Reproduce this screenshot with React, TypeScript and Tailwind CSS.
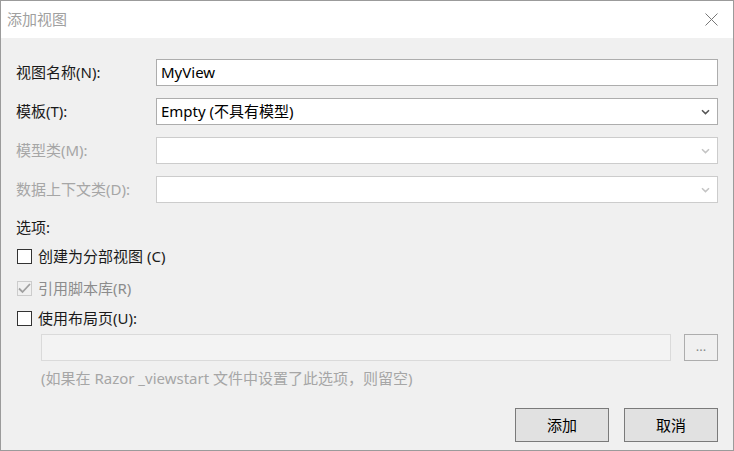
import React from 'react';

const font = { fontFamily: '"Noto Sans", "Noto Sans CJK SC", sans-serif' };

const Chevron = ({ disabled }: { disabled?: boolean }) => (
  <svg width="9" height="6" viewBox="0 0 9 6" className="mr-[7px]">
    <path d="M1 1.2 L4.5 4.6 L8 1.2" fill="none" stroke={disabled ? '#c4c4c4' : '#555'} strokeWidth="1.5" />
  </svg>
);

const FieldRow = ({
  label,
  value,
  select,
  disabled,
  first,
}: {
  label: string;
  value?: string;
  select?: boolean;
  disabled?: boolean;
  first?: boolean;
}) => (
  <div className={`flex items-center h-[27px] ${first ? 'mt-[21px]' : 'mt-[12px]'}`}>
    <div className={`w-[140px] text-[15px] ${disabled ? 'text-[#a6a6a6]' : 'text-[#1a1a1a]'}`}>{label}</div>
    <div
      className={`flex-1 h-full flex items-center justify-between bg-white border ${
        disabled ? 'border-[#cccccc]' : 'border-[#adadad]'
      }`}
    >
      <span className="pl-[4px] text-[15px] text-black">{value}</span>
      {select && <Chevron disabled={disabled} />}
    </div>
  </div>
);

const CheckRow = ({
  label,
  checked,
  disabled,
  className,
}: {
  label: string;
  checked?: boolean;
  disabled?: boolean;
  className: string;
}) => (
  <div className={`flex items-center h-[20px] ${className}`}>
    <div
      className={`ml-[1px] w-[15px] h-[15px] flex items-center justify-center border ${
        disabled ? 'border-[#cccccc] bg-[#f0f0f0]' : 'border-[#333333] bg-white'
      }`}
    >
      {checked && (
        <svg width="13" height="11" viewBox="0 0 13 11">
          <path d="M1 5.5 L4.5 9 L12 1" fill="none" stroke="#a0a0a0" strokeWidth="1.8" />
        </svg>
      )}
    </div>
    <span className={`ml-[6px] text-[15px] ${disabled ? 'text-[#8c8c8c]' : 'text-[#1a1a1a]'}`}>{label}</span>
  </div>
);

export default function App() {
  return (
    <div style={font} className="w-[734px] h-[451px] flex flex-col border border-[#9b9b9b] bg-[#f0f0f0]">
      {/* Title bar */}
      <div className="h-[37px] shrink-0 bg-white flex items-center justify-between">
        <span className="pl-[6px] text-[15px] text-[#a0a0a0]">添加视图</span>
        <svg width="13" height="13" viewBox="0 0 13 13" className="mr-[15px]">
          <path d="M0.5 0.5 L12.5 12.5 M12.5 0.5 L0.5 12.5" stroke="#777" strokeWidth="1" />
        </svg>
      </div>

      {/* Body */}
      <div className="flex-1 flex flex-col px-[15px]">
        <FieldRow first label="视图名称(N):" value="MyView" />
        <FieldRow label="模板(T):" value="Empty (不具有模型)" select />
        <FieldRow label="模型类(M):" select disabled />
        <FieldRow label="数据上下文类(D):" select disabled />

        <div className="mt-[14px] h-[20px] flex items-center text-[15px] text-[#1a1a1a]">选项:</div>

        <CheckRow className="mt-[9px]" label="创建为分部视图 (C)" />
        <CheckRow className="mt-[12px]" label="引用脚本库(R)" checked disabled />
        <CheckRow className="mt-[10px]" label="使用布局页(U):" />

        <div className="mt-[6px] pl-[25px] h-[27px] flex gap-[13px]">
          <div className="flex-1 bg-[#f3f3f3] border border-[#dadada]" />
          <div className="w-[34px] border border-[#adadad] flex items-center justify-center text-[13px] text-[#8a8a8a] leading-none pb-[2px]">
            ...
          </div>
        </div>

        <div className="mt-[7px] pl-[25px] h-[20px] flex items-center text-[15px] text-[#a6a6a6]">
          (如果在 Razor _viewstart 文件中设置了此选项，则留空)
        </div>

        <div className="mt-[20px] flex justify-end gap-[15px]">
          <button className="w-[94px] h-[34px] bg-[#e1e1e1] border border-[#7a7a7a] text-[15px] text-black">添加</button>
          <button className="w-[94px] h-[34px] bg-[#e1e1e1] border border-[#7a7a7a] text-[15px] text-black">取消</button>
        </div>
      </div>
    </div>
  );
}
